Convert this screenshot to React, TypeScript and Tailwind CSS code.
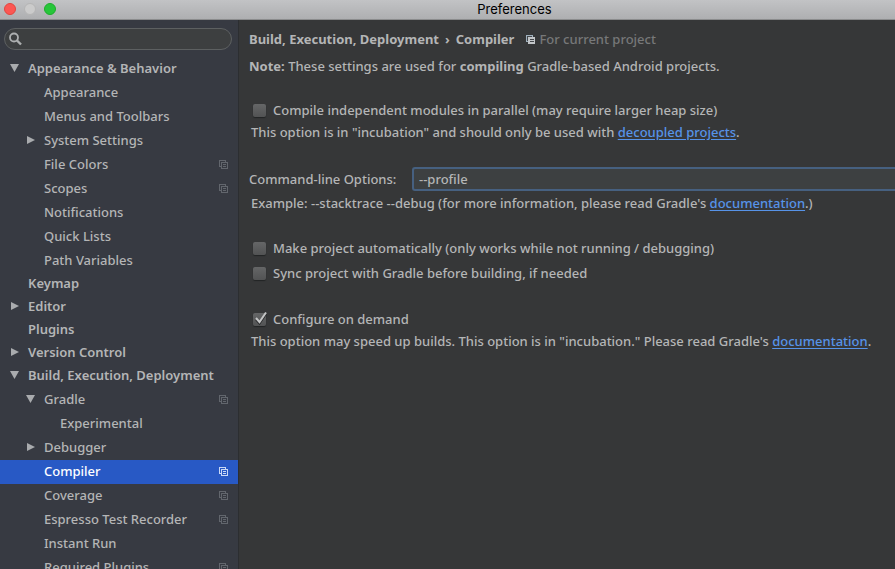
import { useState } from "react";
import type { ReactNode } from "react";

type Item = {
  label: string;
  level: 0 | 1 | 2;
  arrow?: "open" | "closed";
  project?: boolean;
  selected?: boolean;
};

const items: Item[] = [
  { label: "Appearance & Behavior", level: 0, arrow: "open" },
  { label: "Appearance", level: 1 },
  { label: "Menus and Toolbars", level: 1 },
  { label: "System Settings", level: 1, arrow: "closed" },
  { label: "File Colors", level: 1, project: true },
  { label: "Scopes", level: 1, project: true },
  { label: "Notifications", level: 1 },
  { label: "Quick Lists", level: 1 },
  { label: "Path Variables", level: 1 },
  { label: "Keymap", level: 0 },
  { label: "Editor", level: 0, arrow: "closed" },
  { label: "Plugins", level: 0 },
  { label: "Version Control", level: 0, arrow: "closed" },
  { label: "Build, Execution, Deployment", level: 0, arrow: "open" },
  { label: "Gradle", level: 1, arrow: "open", project: true },
  { label: "Experimental", level: 2 },
  { label: "Debugger", level: 1, arrow: "closed" },
  { label: "Compiler", level: 1, project: true, selected: true },
  { label: "Coverage", level: 1, project: true },
  { label: "Espresso Test Recorder", level: 1, project: true },
  { label: "Instant Run", level: 1 },
  { label: "Required Plugins", level: 1, project: true },
];

const indent = { 0: "pl-2", 1: "pl-6", 2: "pl-10" };

function ProjectIcon({ className }: { className: string }) {
  return (
    <svg viewBox="0 0 9 9" shapeRendering="crispEdges" className={`size-[9px] shrink-0 ${className}`} fill="none" stroke="currentColor" aria-hidden="true">
      <path d="M2 6.5H.5V.5h6V2" />
      <path d="M2.5 2.5h6v6h-6zM4 4.5h3M4 6.5h3" />
    </svg>
  );
}

function ScopeIcon() {
  return (
    <svg viewBox="0 0 9 9" shapeRendering="crispEdges" className="ml-3 size-[9px] shrink-0" aria-hidden="true">
      <path d="M0 0h7v2H2v5H0z" fill="#9fb0bd" />
      <path d="M2 2h7v7H2z" fill="#c3c6c9" />
      <path d="M1 1h5v1H2v4H1zM4 4h4v1H4zM4 6h4v1H4z" fill="#45484b" />
    </svg>
  );
}

function Arrow({ kind }: { kind?: "open" | "closed" }) {
  return (
    <svg viewBox="0 0 12 12" className="size-3 shrink-0" fill="#a9abae" aria-hidden="true">
      {kind === "open" && <path d="M2 2h9L6.500 10z" />}
      {kind === "closed" && <path d="M3 2v8l8-4z" />}
    </svg>
  );
}

function TreeRow({ item }: { item: Item }) {
  const root = item.level === 0;
  return (
    <li>
      <button
        type="button"
        className={`flex w-full items-center gap-2 pr-[10px] text-left ${indent[item.level]} ${
          root ? "h-[23px] pb-[3px] font-semibold" : "h-6 pb-0.5"
        } ${item.selected ? "bg-[#2859c5] text-white" : ""}`}
      >
        <Arrow kind={item.arrow} />
        <span className="flex-1 whitespace-nowrap">{item.label}</span>
        {item.project && <ProjectIcon className={item.selected ? "text-[#c9d8f5]" : "text-[#62666d]"} />}
      </button>
    </li>
  );
}

function Check({ label, initial = false }: { label: string; initial?: boolean }) {
  const [on, setOn] = useState(initial);
  return (
    <label className="flex h-[22px] items-center gap-[7px] pl-1 whitespace-nowrap">
      <span className="relative size-[13px] shrink-0">
        <input
          type="checkbox"
          checked={on}
          onChange={(e) => setOn(e.target.checked)}
          className="block size-[13px] appearance-none rounded-[2px] bg-linear-to-b from-[#656667] to-[#525354] shadow-[0_1px_1px_#222425]"
        />
        {on && (
          <svg viewBox="0 0 16 16" className="pointer-events-none absolute -top-0.5 left-0 size-4" fill="none" aria-hidden="true">
            <path d="M3 8.500l3.500 4L13 3" stroke="#2a2b2c" strokeWidth="2" />
            <path d="M3 7l3.500 4L13 1.500" stroke="#c4c5c6" strokeWidth="2" />
          </svg>
        )}
      </span>
      {label}
    </label>
  );
}

function Hint({ children }: { children: ReactNode }) {
  return <p className="h-[22px] pl-0.5 leading-[22px] whitespace-nowrap">{children}</p>;
}

function Link({ children }: { children: ReactNode }) {
  return (
    <a href="#" className="text-[#5793e8] underline underline-offset-2">
      {children}
    </a>
  );
}

export default function App() {
  const [options, setOptions] = useState("--profile");
  return (
    <div className="flex h-screen flex-col overflow-hidden bg-[#363738] font-['Noto_Sans','Lucida_Grande',sans-serif] text-[13px] leading-[22px] font-medium text-[#b4b5b6]">
      <header className="grid h-5 shrink-0 grid-cols-[1fr_auto_1fr] items-center border-b border-[#8b8c8d] bg-linear-to-b from-[#c2c3c5] to-[#aeafb1] px-1 pb-px">
        <div className="flex gap-2">
          <button type="button" aria-label="Close" className="size-3 rounded-full border border-[#e2463f] bg-[#fc5753]" />
          <button type="button" aria-label="Minimize" className="size-3 rounded-full border border-[#b5b5b5] bg-[#cbcbcb]" />
          <button type="button" aria-label="Zoom" className="size-3 rounded-full border border-[#1dad2b] bg-[#27c63a]" />
        </div>
        <h1 className="pl-[134px] font-['Inter',sans-serif] text-[13px] leading-[18px] font-normal text-black">Preferences</h1>
      </header>

      <div className="flex min-h-0 flex-1">
        <aside className="w-[239px] shrink-0 overflow-hidden border-r border-[#2c2e31] bg-[#373a42] pt-2">
          <label className="mr-[6px] ml-1 flex h-[22px] items-center rounded-full border border-[#5d6061] bg-[#3d3f40] pl-1">
            <svg viewBox="0 0 14 14" className="size-[14px] shrink-0" fill="none" stroke="#adafb0" aria-hidden="true">
              <circle cx="5" cy="5.500" r="4" strokeWidth="1.800" />
              <path d="M8 8.500l4 4" strokeWidth="2.400" />
            </svg>
            <input type="search" aria-label="Search settings" className="w-full bg-transparent px-1 outline-none" />
          </label>
          <nav className="pt-2" aria-label="Settings">
            <ul>
              {items.map((item) => (
                <TreeRow key={item.label} item={item} />
              ))}
            </ul>
          </nav>
        </aside>

        <main className="min-w-0 flex-1 overflow-hidden pt-2 pl-[10px]">
          <div className="flex h-[22px] items-center whitespace-nowrap">
            <h2 className="flex gap-[6px] font-bold">
              <span>Build, Execution, Deployment</span>
              <span>›</span>
              <span>Compiler</span>
            </h2>
            <ScopeIcon />
            <span className="ml-1 text-[#777879]">For current project</span>
          </div>
          <p className="mt-[5px] whitespace-nowrap">
            <b>Note:</b> These settings are used for <b>compiling</b> Gradle-based Android projects.
          </p>

          <section className="mt-[22px]">
            <Check label="Compile independent modules in parallel (may require larger heap size)" />
            <Hint>
              This option is in "incubation" and should only be used with <Link>decoupled projects</Link>.
            </Hint>
          </section>

          <section className="mt-6">
            <div className="flex h-[25px] items-start">
              <label htmlFor="options" className="w-[163px] shrink-0 leading-6 whitespace-nowrap">
                Command-line Options:
              </label>
              <input
                id="options"
                value={options}
                onChange={(e) => setOptions(e.target.value)}
                className="h-6 min-w-0 flex-1 rounded-l-[3px] border-2 border-r-0 border-[#466080] bg-[#3d4041] px-[5px] outline-none"
              />
            </div>
            <Hint>
              Example: --stacktrace --debug (for more information, please read Gradle's <Link>documentation</Link>.)
            </Hint>
          </section>

          <section className="mt-[23px] flex flex-col gap-[3px]">
            <Check label="Make project automatically (only works while not running / debugging)" />
            <Check label="Sync project with Gradle before building, if needed" />
          </section>

          <section className="mt-6">
            <Check label="Configure on demand" initial />
            <Hint>
              This option may speed up builds. This option is in "incubation." Please read Gradle's <Link>documentation</Link>.
            </Hint>
          </section>
        </main>
      </div>
    </div>
  );
}
